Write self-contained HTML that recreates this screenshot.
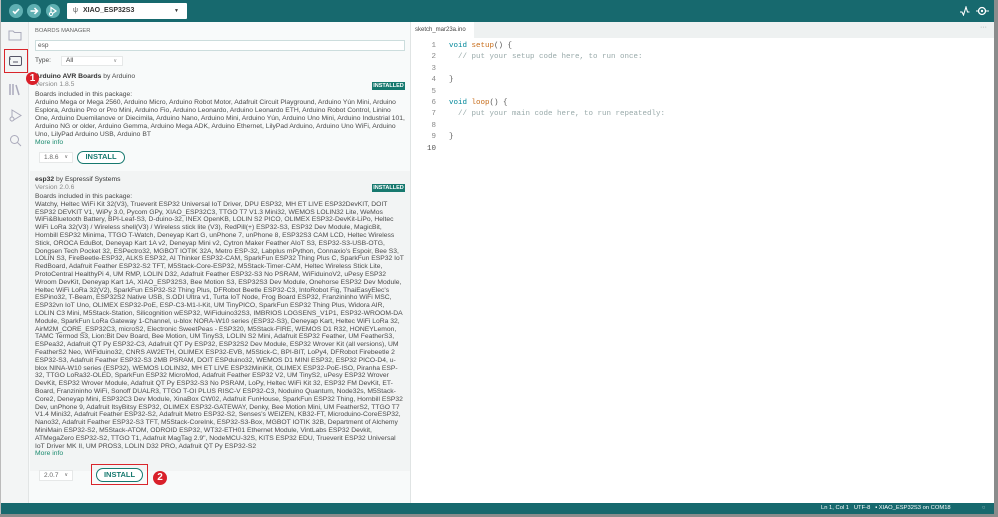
<!DOCTYPE html>
<html><head><meta charset="utf-8"><style>
*{margin:0;padding:0;box-sizing:border-box}
body{width:998px;height:517px;overflow:hidden;background:#8a8c8c;font-family:"Liberation Sans",sans-serif;position:relative}
.win{position:absolute;left:0;top:0;width:994px;height:514px;background:#fff;overflow:hidden;border-left:1px solid #bbb}
.hdr{position:absolute;left:0;top:0;width:994px;height:22px;background:#17696e}
.cb{position:absolute;top:4px;width:14px;height:14px;border-radius:50%;background:#5fb0b2}
.sel{position:absolute;left:66px;top:3px;width:120px;height:16px;background:#fff;border-radius:1px;font-size:7px;font-weight:bold;color:#333;line-height:16px;padding-left:16px}
.side{position:absolute;left:0;top:22px;width:28px;height:481px;background:#f3f5f5;border-right:1px solid #e2e5e5}
.panel{position:absolute;left:28px;top:22px;width:382px;height:481px;background:#f8fafa;border-right:1px solid #e0e4e4}
.t{position:absolute;font-size:6.75px;color:#4a4a4a;white-space:nowrap;line-height:8px}
.l{line-height:7.8px}
.b{font-weight:bold;color:#333}
.g{color:#888}
.badge{position:absolute;width:33px;height:8px;background:#17796f;color:#fff;font-size:5.5px;font-weight:bold;text-align:center;line-height:8px}
.link{color:#1a8a6e}
.btn{position:absolute;border:1.5px solid #17796f;border-radius:8px;color:#17796f;font-weight:bold;font-size:7.5px;text-align:center;background:#fff}
.ver{position:absolute;width:34px;height:11px;background:#fff;border:1px solid #e6e8e8;font-size:6.5px;color:#666;line-height:9px;padding-left:4px}
.ed{position:absolute;left:411px;top:22px;width:583px;height:481px;background:#fff}
.code{position:absolute;font-family:"Liberation Mono",monospace;font-size:7.5px;white-space:pre;line-height:11.4px}
.sb{position:absolute;left:0;top:503px;width:994px;height:11px;background:#17696e;color:#fff;font-size:5.8px;line-height:11px}
</style></head><body>
<div class="win">
<div class="hdr">
 <div class="cb" style="left:8px"><svg width="14" height="14"><path d="M4 7.2l2 2 4-4.2" stroke="#fff" stroke-width="1.6" fill="none"/></svg></div>
 <div class="cb" style="left:26px"><svg width="14" height="14"><path d="M3.5 7h7M7.5 4l3 3-3 3" stroke="#fff" stroke-width="1.5" fill="none"/></svg></div>
 <div class="cb" style="left:45px"><svg width="14" height="14"><path d="M5 3.5l5 3.5-5 3.5z" stroke="#fff" stroke-width="1.2" fill="none"/><circle cx="5" cy="10" r="1.6" stroke="#fff" fill="#5fb0b2"/></svg></div>
 <div class="sel"><span style="position:absolute;left:6px;color:#555;font-weight:normal">ψ</span>XIAO_ESP32S3<span style="position:absolute;right:8px;font-size:5px">▼</span></div>
 <svg style="position:absolute;left:958px;top:6px" width="12" height="10"><path d="M1 6l2 0 1.5 3 2.5-8 1.5 5h2" stroke="#fff" stroke-width="1.1" fill="none"/></svg>
 <svg style="position:absolute;left:975px;top:5px" width="14" height="12"><circle cx="6" cy="6" r="3.5" stroke="#fff" stroke-width="1.3" fill="none"/><circle cx="6" cy="6" r="1.2" fill="#fff"/><path d="M0 6h2M10 6h3" stroke="#fff"/></svg>
</div>
<div class="side">
 <svg style="position:absolute;left:7px;top:7px" width="14" height="12"><path d="M1 2h4l1.5 1.5H13V11H1z" stroke="#aab" fill="none"/></svg>
 <div style="position:absolute;left:3px;top:27px;width:24px;height:24px;border:1.5px solid #d9252b"></div>
 <svg style="position:absolute;left:8px;top:33px" width="13" height="12"><rect x="0.5" y="1.5" width="12" height="9" rx="1.5" stroke="#556" fill="none"/><path d="M4 7h5M0 4h2" stroke="#556"/></svg>
 <svg style="position:absolute;left:8px;top:61px" width="13" height="13"><path d="M1 1v11M4 1v11M7 2l3 10" stroke="#aab" stroke-width="1.5" fill="none"/></svg>
 <svg style="position:absolute;left:8px;top:87px" width="13" height="13"><path d="M3 1l9 5.5-9 5.5z" stroke="#aab" fill="none"/><circle cx="3" cy="10" r="2" stroke="#aab" fill="#f3f5f5"/></svg>
 <svg style="position:absolute;left:8px;top:112px" width="13" height="13"><circle cx="5.5" cy="5.5" r="4" stroke="#aab" fill="none"/><path d="M8.5 8.5l3.5 3.5" stroke="#aab"/></svg>
</div>
<div class="panel">
 <div class="t" style="left:6px;top:5px;font-size:5.8px;color:#666">BOARDS MANAGER</div>
 <div style="position:absolute;left:6px;top:18px;width:370px;height:11px;background:#fff;border:1px solid #cdd"></div>
 <div class="t" style="left:9px;top:20px;font-size:6.5px;color:#555">esp</div>
 <div class="t" style="left:6px;top:35px;font-size:6.5px">Type:</div>
 <div style="position:absolute;left:32px;top:34px;width:62px;height:10px;background:#fff;border:1px solid #e6e8e8;font-size:6.5px;color:#444;padding-left:4px;line-height:8px">All<span style="position:absolute;right:5px;font-size:5px;color:#888">∨</span></div>
 <div class="t" style="left:6px;top:51px"><span class="b">Arduino AVR Boards</span> by Arduino</div>
 <div class="t g" style="left:6px;top:59px">Version 1.8.5</div>
 <div class="badge" style="left:343px;top:60px">INSTALLED</div>
 <div class="t" style="left:6px;top:69px">Boards included in this package:<br>Arduino Mega or Mega 2560, Arduino Micro, Arduino Robot Motor, Adafruit Circuit Playground, Arduino Yún Mini, Arduino<br>Esplora, Arduino Pro or Pro Mini, Arduino Fio, Arduino Leonardo, Arduino Leonardo ETH, Arduino Robot Control, Linino<br>One, Arduino Duemilanove or Diecimila, Arduino Nano, Arduino Mini, Arduino Yún, Arduino Uno Mini, Arduino Industrial 101,<br>Arduino NG or older, Arduino Gemma, Arduino Mega ADK, Arduino Ethernet, LilyPad Arduino, Arduino Uno WiFi, Arduino<br>Uno, LilyPad Arduino USB, Arduino BT<br><span class="link">More info</span></div>
 <div class="ver" style="left:10px;top:130px">1.8.6<span style="position:absolute;right:4px;font-size:5px">∨</span></div>
 <div class="btn" style="left:48px;top:129px;width:48px;height:13px;line-height:10px">INSTALL</div>
 <div style="position:absolute;left:1px;top:149px;width:380px;height:300px;background:#f2f4f4"></div>
 <div class="t" style="left:6px;top:154px"><span class="b">esp32</span> by <span style="color:#333">Espressif Systems</span></div>
 <div class="t g" style="left:6px;top:162px">Version 2.0.6</div>
 <div class="badge" style="left:343px;top:162px">INSTALLED</div>
 <div class="t l" style="left:6px;top:171px">Boards included in this package:<br>Watchy, Heltec WiFi Kit 32(V3), Trueverit ESP32 Universal IoT Driver, DPU ESP32, MH ET LIVE ESP32DevKIT, DOIT<br>ESP32 DEVKIT V1, WiPy 3.0, Pycom GPy, XIAO_ESP32C3, TTGO T7 V1.3 Mini32, WEMOS LOLIN32 Lite, WeMos<br>WiFi&amp;Bluetooth Battery, BPI-Leaf-S3, D-duino-32, INEX OpenKB, LOLIN S2 PICO, OLIMEX ESP32-DevKit-LiPo, Heltec<br>WiFi LoRa 32(V3) / Wireless shell(V3) / Wireless stick lite (V3), RedPill(+) ESP32-S3, ESP32 Dev Module, MagicBit,<br>Hornbill ESP32 Minima, TTGO T-Watch, Deneyap Kart G, unPhone 7, unPhone 8, ESP32S3 CAM LCD, Heltec Wireless<br>Stick, OROCA EduBot, Deneyap Kart 1A v2, Deneyap Mini v2, Cytron Maker Feather AIoT S3, ESP32-S3-USB-OTG,<br>Dongsen Tech Pocket 32, ESPectro32, MGBOT IOTIK 32A, Metro ESP-32, Labplus mPython, Connaxio's Espoir, Bee S3,<br>LOLIN S3, FireBeetle-ESP32, ALKS ESP32, AI Thinker ESP32-CAM, SparkFun ESP32 Thing Plus C, SparkFun ESP32 IoT<br>RedBoard, Adafruit Feather ESP32-S2 TFT, M5Stack-Core-ESP32, M5Stack-Timer-CAM, Heltec Wireless Stick Lite,<br>ProtoCentral HealthyPi 4, UM RMP, LOLIN D32, Adafruit Feather ESP32-S3 No PSRAM, WiFiduinoV2, uPesy ESP32<br>Wroom DevKit, Deneyap Kart 1A, XIAO_ESP32S3, Bee Motion S3, ESP32S3 Dev Module, Onehorse ESP32 Dev Module,<br>Heltec WiFi LoRa 32(V2), SparkFun ESP32-S2 Thing Plus, DFRobot Beetle ESP32-C3, IntoRobot Fig, ThaiEasyElec's<br>ESPino32, T-Beam, ESP32S2 Native USB, S.ODI Ultra v1, Turta IoT Node, Frog Board ESP32, Franzininho WiFi MSC,<br>ESP32vn IoT Uno, OLIMEX ESP32-PoE, ESP-C3-M1-I-Kit, UM TinyPICO, SparkFun ESP32 Thing Plus, Widora AIR,<br>LOLIN C3 Mini, M5Stack-Station, Silicognition wESP32, WiFiduino32S3, IMBRIOS LOGSENS_V1P1, ESP32-WROOM-DA<br>Module, SparkFun LoRa Gateway 1-Channel, u-blox NORA-W10 series (ESP32-S3), Deneyap Kart, Heltec WiFi LoRa 32,<br>AirM2M_CORE_ESP32C3, microS2, Electronic SweetPeas - ESP320, M5Stack-FIRE, WEMOS D1 R32, HONEYLemon,<br>TAMC Termod S3, Lion:Bit Dev Board, Bee Motion, UM TinyS3, LOLIN S2 Mini, Adafruit ESP32 Feather, UM FeatherS3,<br>ESPea32, Adafruit QT Py ESP32-C3, Adafruit QT Py ESP32, ESP32S2 Dev Module, ESP32 Wrover Kit (all versions), UM<br>FeatherS2 Neo, WiFiduino32, CNRS AW2ETH, OLIMEX ESP32-EVB, M5Stick-C, BPI-BIT, LoPy4, DFRobot Firebeetle 2<br>ESP32-S3, Adafruit Feather ESP32-S3 2MB PSRAM, DOIT ESPduino32, WEMOS D1 MINI ESP32, ESP32 PICO-D4, u-<br>blox NINA-W10 series (ESP32), WEMOS LOLIN32, MH ET LIVE ESP32MiniKit, OLIMEX ESP32-PoE-ISO, Piranha ESP-<br>32, TTGO LoRa32-OLED, SparkFun ESP32 MicroMod, Adafruit Feather ESP32 V2, UM TinyS2, uPesy ESP32 Wrover<br>DevKit, ESP32 Wrover Module, Adafruit QT Py ESP32-S3 No PSRAM, LoPy, Heltec WiFi Kit 32, ESP32 FM DevKit, ET-<br>Board, Franzininho WiFi, Sonoff DUALR3, TTGO T-OI PLUS RISC-V ESP32-C3, Noduino Quantum, Node32s, M5Stack-<br>Core2, Deneyap Mini, ESP32C3 Dev Module, XinaBox CW02, Adafruit FunHouse, SparkFun ESP32 Thing, Hornbill ESP32<br>Dev, unPhone 9, Adafruit ItsyBitsy ESP32, OLIMEX ESP32-GATEWAY, Denky, Bee Motion Mini, UM FeatherS2, TTGO T7<br>V1.4 Mini32, Adafruit Feather ESP32-S2, Adafruit Metro ESP32-S2, Senses's WEIZEN, KB32-FT, Microduino-CoreESP32,<br>Nano32, Adafruit Feather ESP32-S3 TFT, M5Stack-CoreInk, ESP32-S3-Box, MGBOT IOTIK 32B, Department of Alchemy<br>MiniMain ESP32-S2, M5Stack-ATOM, ODROID ESP32, WT32-ETH01 Ethernet Module, VintLabs ESP32 Devkit,<br>ATMegaZero ESP32-S2, TTGO T1, Adafruit MagTag 2.9", NodeMCU-32S, KITS ESP32 EDU, Trueverit ESP32 Universal<br>IoT Driver MK II, UM PROS3, LOLIN D32 PRO, Adafruit QT Py ESP32-S2<br><span class="link">More info</span></div>
 <div class="ver" style="left:10px;top:448px">2.0.7<span style="position:absolute;right:4px;font-size:5px">∨</span></div>
 <div class="btn" style="left:67px;top:446px;width:47px;height:14px;line-height:11px">INSTALL</div>
 <div style="position:absolute;left:62px;top:442px;width:57px;height:21px;border:1.5px solid #d9252b"></div>
</div>
<div style="position:absolute;left:25px;top:72px;width:13px;height:13px;border-radius:50%;background:#d9202a;color:#fff;font-size:10px;font-weight:bold;text-align:center;line-height:13px">1</div>
<div style="position:absolute;left:152px;top:471px;width:14px;height:14px;border-radius:50%;background:#d9202a;color:#fff;font-size:10px;font-weight:bold;text-align:center;line-height:14px">2</div>
<div class="ed">
 <div style="position:absolute;left:0;top:0;width:583px;height:16px;background:#eef1f1"></div>
 <div style="position:absolute;left:0;top:0;width:62px;height:16px;background:#fff;font-size:6px;color:#444;line-height:16px;padding-left:3px">sketch_mar23a.ino</div>
 <div style="position:absolute;right:8px;top:2px;font-size:7px;color:#999">···</div>
 <div class="code" style="left:6px;top:19px;width:18px;text-align:right;color:#888">1
2
3
4
5
6
7
8
9
<b style="color:#555;font-weight:normal">10</b></div>
 <div class="code" style="left:37px;top:19px;color:#555"><span style="color:#00879a">void</span> <span style="color:#c76c19">setup</span>() {
  <span style="color:#9aa">// put your setup code here, to run once:</span>

}

<span style="color:#00879a">void</span> <span style="color:#c76c19">loop</span>() {
  <span style="color:#9aa">// put your main code here, to run repeatedly:</span>

}
</div>
</div>
<div class="sb"><span style="position:absolute;left:820px">Ln 1, Col 1 &nbsp; UTF-8 &nbsp; ▪ XIAO_ESP32S3 on COM18</span><span style="position:absolute;left:981px">◌</span></div>
</div>
</body></html>
